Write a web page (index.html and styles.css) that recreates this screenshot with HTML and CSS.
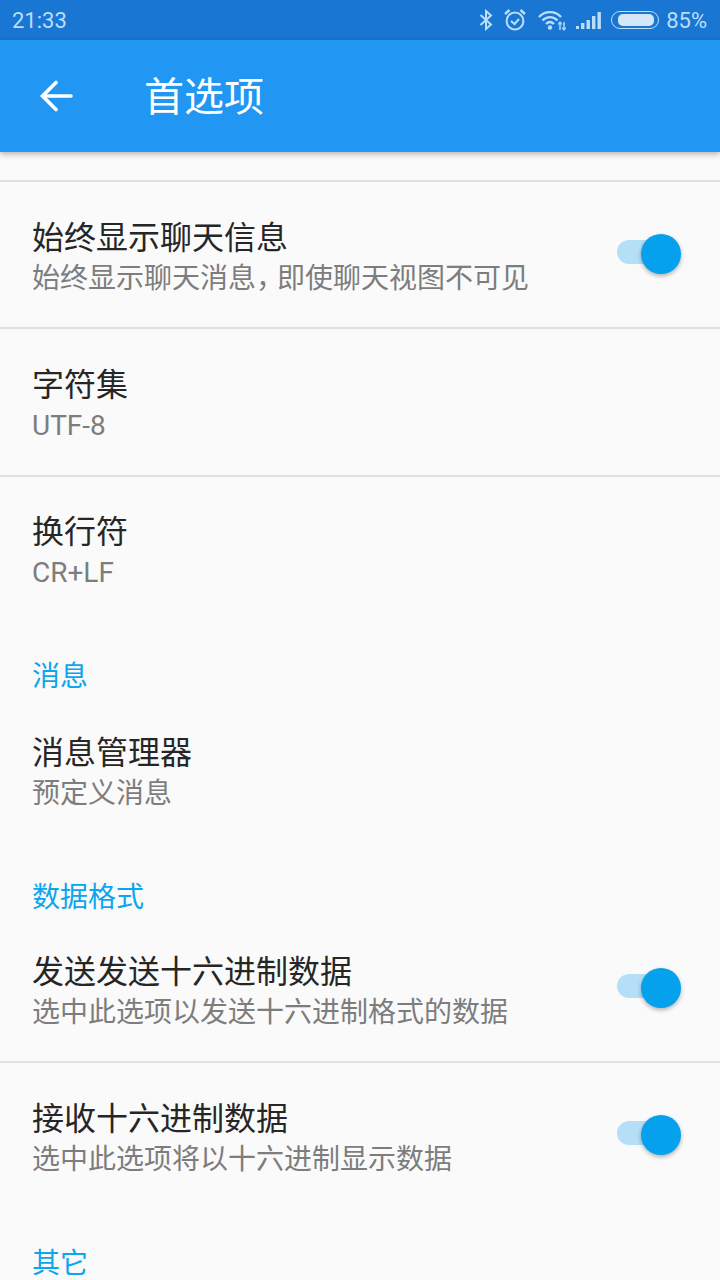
FILE: index.html
```html
<!DOCTYPE html>
<html lang="zh-CN">
<head>
  <meta charset="UTF-8">
  <meta name="viewport" content="width=device-width, initial-scale=1.0">
  <title>首选项</title>
  <link rel="stylesheet" href="styles.css">
</head>
<body>
  <!-- Status bar -->
  <div class="status-bar">
    <span class="clock">21:33</span>
    <div class="status-icons">
      <svg class="ic-bt" width="14" height="22" viewBox="0 0 14 22" fill="none" stroke="currentColor" stroke-width="2">
        <path d="M1.5 6 L12 15.5 L7 20 V2 L12 6.5 L1.5 16"/>
      </svg>
      <svg class="ic-alarm" width="24" height="24" viewBox="0 0 24 24" fill="none" stroke="currentColor" stroke-width="2">
        <circle cx="12" cy="13" r="8.4"/>
        <path d="M8 13 L11.5 16 L16 11"/>
        <path d="M2 6 L6.5 2 M22 6 L17.5 2" stroke-width="2.4"/>
      </svg>
      <svg class="ic-wifi" width="28" height="22" viewBox="0 0 28 22" fill="none" stroke="currentColor" stroke-width="2.4">
        <path d="M1 8 C7 1.5 17 1.5 23 8"/>
        <path d="M4.5 11.5 C9 7 15 7 19.5 11.5"/>
        <path d="M8 15 C10.5 12.5 13.5 12.5 16 15"/>
        <circle cx="12" cy="18.5" r="2.2" fill="currentColor" stroke="none"/>
        <path d="M22 13 V21 M26 13 V21" stroke-width="1.4"/>
        <path d="M20 15.5 L22 13 L24 15.5 M24 18.5 L26 21 L28 18.5" stroke-width="1.2"/>
      </svg>
      <svg class="ic-signal" width="26" height="18" viewBox="0 0 26 18" fill="currentColor">
        <rect x="0" y="15" width="3" height="3"/>
        <rect x="5" y="12" width="3.4" height="6"/>
        <rect x="10.5" y="9" width="3.4" height="9"/>
        <rect x="16" y="5" width="3.4" height="13"/>
        <rect x="21.5" y="1" width="3.4" height="17"/>
      </svg>
      <div class="battery"><div class="battery-fill"></div></div>
      <span class="battery-pct">85%</span>
    </div>
  </div>

  <!-- App bar -->
  <header class="app-bar">
    <svg class="back" width="36" height="32" viewBox="0 0 36 32" fill="none" stroke="#fff" stroke-width="3.6" stroke-linecap="round">
      <path d="M33 16 H5"/>
      <path d="M18 2.5 L4.5 16 L18 29.5"/>
    </svg>
    <h1>首选项</h1>
  </header>

  <main class="prefs">
    <div class="pref divided first">
      <div class="pref-text">
        <div class="pref-title">始终显示聊天信息</div>
        <div class="pref-sub">始终显示聊天消息<span class="comma">，</span>即使聊天视图不可见</div>
      </div>
      <div class="switch"><div class="thumb"></div></div>
    </div>

    <div class="pref divided charset">
      <div class="pref-text">
        <div class="pref-title">字符集</div>
        <div class="pref-sub">UTF-8</div>
      </div>
    </div>

    <div class="pref newline">
      <div class="pref-text">
        <div class="pref-title">换行符</div>
        <div class="pref-sub">CR+LF</div>
      </div>
    </div>

    <div class="category">消息</div>
    <div class="pref">
      <div class="pref-text">
        <div class="pref-title">消息管理器</div>
        <div class="pref-sub">预定义消息</div>
      </div>
    </div>

    <div class="category">数据格式</div>
    <div class="pref divided send-hex">
      <div class="pref-text">
        <div class="pref-title">发送发送十六进制数据</div>
        <div class="pref-sub">选中此选项以发送十六进制格式的数据</div>
      </div>
      <div class="switch"><div class="thumb"></div></div>
    </div>

    <div class="pref recv-hex">
      <div class="pref-text">
        <div class="pref-title">接收十六进制数据</div>
        <div class="pref-sub">选中此选项将以十六进制显示数据</div>
      </div>
      <div class="switch"><div class="thumb"></div></div>
    </div>

    <div class="category">其它</div>
  </main>
</body>
</html>
```

FILE: styles.css
```css
* {
  box-sizing: border-box;
}

html, body {
  margin: 0;
  height: 1280px;
  overflow: hidden;
}

body {
  background: #fafafa;
  font-family: Roboto, "Noto Sans CJK SC", sans-serif;
  color: #262626;
}

.status-bar {
  height: 40px;
  background: #1976d2;
  color: #bbdefb;
  display: flex;
  align-items: center;
  justify-content: space-between;
  padding: 0 13px 0 12px;
  font-size: 22px;
}

.status-icons {
  display: flex;
  align-items: center;
}

.ic-bt {
  margin-right: 10px;
}

.ic-alarm {
  margin-right: 11px;
}

.ic-wifi {
  margin-right: 10px;
}

.ic-signal {
  margin-right: 9px;
}

.battery {
  width: 48px;
  height: 18px;
  border: 1.5px solid #bbdefb;
  border-radius: 9px;
  padding: 2px 4px 2px 6px;
  margin-right: 7px;
}

.battery-fill {
  height: 100%;
  background: #d5e6f7;
  border-radius: 5px;
}

.app-bar {
  position: relative;
  z-index: 2;
  height: 112px;
  background: #2196f3;
  display: flex;
  align-items: center;
  padding-left: 38px;
  box-shadow: 0 2px 6px rgba(0, 0, 0, 0.3);
}

.app-bar h1 {
  margin: 0 0 4px 70px;
  font-size: 40px;
  font-weight: 400;
  color: #fff;
}

.prefs {
  padding-top: 28px;
}

.pref {
  display: flex;
  align-items: center;
  justify-content: space-between;
  padding: 32px 47px 31px 32px;
}

.divided {
  border-bottom: 2px solid #e0e0e0;
}

.first {
  border-top: 2px solid #e0e0e0;
  padding-top: 34px;
  padding-bottom: 29px;
}

.charset {
  padding-top: 34px;
  padding-bottom: 30px;
}

.newline {
  padding-top: 33px;
}

.send-hex {
  padding-top: 30px;
  padding-bottom: 29px;
}

.recv-hex {
  padding-top: 34px;
}

.pref-title {
  font-size: 32px;
  line-height: 44px;
}

.pref-sub {
  font-size: 28px;
  line-height: 38px;
  color: #7d7d7d;
}

/* the comma is narrower than a full CJK cell here */
.comma {
  letter-spacing: -7px;
}

.category {
  padding: 35px 32px 3px;
  font-size: 28px;
  line-height: 38px;
  color: #0ba6ee;
}

.switch {
  position: relative;
  width: 56px;
  height: 24px;
  margin-bottom: 10px;
  background: #b5dff6;
  border-radius: 12px;
}

.thumb {
  position: absolute;
  right: -8px;
  top: -6px;
  width: 40px;
  height: 40px;
  border-radius: 50%;
  background: #05a1ec;
  box-shadow: 0 2px 4px rgba(0, 0, 0, 0.3);
}
```
